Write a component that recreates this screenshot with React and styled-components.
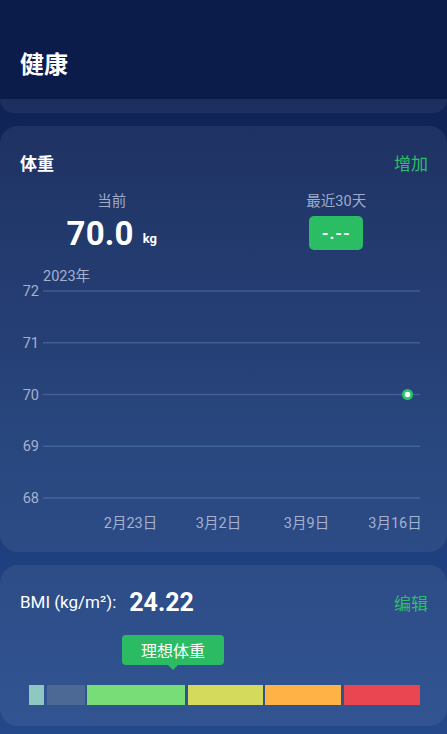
import React from "react";
import styled, { createGlobalStyle } from "styled-components";

const Global = createGlobalStyle`
  html, body { margin: 0; padding: 0; }
  body {
    width: 447px;
    min-height: 734px;
    background: linear-gradient(180deg, #0c1d4c 0px, #0f2357 110px, #1a3a76 450px, #24498b 734px);
    font-family: Roboto, "Noto Sans CJK SC", sans-serif;
    color: #fff;
    overflow: hidden;
  }
`;

const Page = styled.div`
  display: flex;
  flex-direction: column;
  min-height: 734px;
`;

const Header = styled.header`
  height: 99px;
  box-sizing: border-box;
  padding: 50px 20px 0;
  background: #0b1c4b;
`;

const Title = styled.h1`
  margin: 0;
  font-size: 24px;
  line-height: 30px;
  font-weight: 700;
`;

const PrevCardEdge = styled.div`
  height: 14px;
  background: rgba(255, 255, 255, 0.06);
  border-radius: 0 0 18px 18px;
`;

const Card = styled.section`
  margin-top: ${(p) => p.$top}px;
  background: rgba(255, 255, 255, 0.065);
  border-radius: 18px;
  padding: ${(p) => p.$pad};
  display: flex;
  flex-direction: column;
`;

const CardHead = styled.div`
  display: flex;
  align-items: center;
  justify-content: space-between;
  padding: 0 19px 0 20px;
  height: ${(p) => p.$h}px;
`;

const CardTitle = styled.div`
  font-size: 17px;
  font-weight: 700;
`;

const Action = styled.div`
  font-size: 17px;
  color: #2cbf67;
`;

const Stats = styled.div`
  display: grid;
  grid-template-columns: 1fr 1fr;
  margin-top: 18px;
`;

const Stat = styled.div`
  display: flex;
  flex-direction: column;
  align-items: center;
`;

const StatLabel = styled.div`
  font-size: 14.5px;
  line-height: 20px;
  color: #9eabc9;
  margin-left: ${(p) => p.$ml || 0}px;
`;

const ValueRow = styled.div`
  height: 38px;
  display: flex;
  align-items: center;
  padding-top: 4px;
  box-sizing: border-box;
`;

const BigValue = styled.span`
  font-size: 33px;
  font-weight: 700;
  letter-spacing: 0.2px;
`;

const Unit = styled.span`
  font-size: 13px;
  font-weight: 700;
  margin-left: 9px;
  margin-top: 10px;
`;

const DashButton = styled.div`
  width: 54px;
  height: 34px;
  margin-top: 4px;
  margin-left: 2px;
  border-radius: 5px;
  background: #2bbd64;
  display: flex;
  align-items: center;
  justify-content: center;
  font-size: 17px;
  font-weight: 700;
  letter-spacing: 1px;
`;

const ChartBox = styled.div`
  margin-top: 12px;
  height: 278px;
`;

const BmiLabel = styled.span`
  font-size: 17px;
  margin-right: 13px;
`;

const BmiValue = styled.span`
  font-size: 25px;
  font-weight: 700;
`;

const BmiLeft = styled.div`
  display: flex;
  align-items: center;
`;

const ScaleArea = styled.div`
  position: relative;
  margin-top: 19px;
  padding-top: 50px;
`;

const Tip = styled.div`
  position: absolute;
  top: 0;
  left: ${(p) => p.$left}px;
  width: 102px;
  height: 30px;
  border-radius: 4px;
  background: #2bbb62;
  display: flex;
  align-items: center;
  justify-content: center;
  font-size: 16px;
  &::after {
    content: "";
    position: absolute;
    left: 45px;
    bottom: -5px;
    border-left: 6px solid transparent;
    border-right: 6px solid transparent;
    border-top: 6px solid #2bbb62;
  }
`;

const Bar = styled.div`
  display: flex;
  gap: 2.6px;
  padding-left: 29px;
  height: 20px;
`;

const Seg = styled.div`
  width: ${(p) => p.$w}px;
  background: ${(p) => p.$c};
`;

const gridY = [29, 80.75, 132.5, 184.25, 236];
const yLabels = ["72", "71", "70", "69", "68"];
const xLabels = [
  ["2月23日", 130.5],
  ["3月2日", 218.5],
  ["3月9日", 306.5],
  ["3月16日", 395],
];

function WeightChart() {
  const labelStyle = {
    fontFamily: 'Roboto, "Noto Sans CJK SC", sans-serif',
    fontSize: 14.5,
    fill: "#a4b1cf",
  };
  return (
    <svg width="447" height="278" viewBox="0 0 447 278">
      <text x="43" y="19" style={labelStyle}>2023年</text>
      {gridY.map((y, i) => (
        <g key={i}>
          <line x1="43" x2="420" y1={y} y2={y} stroke="rgba(120,155,215,0.33)" strokeWidth="1.3" />
          <text x="39" y={y + 5} textAnchor="end" style={labelStyle}>
            {yLabels[i]}
          </text>
        </g>
      ))}
      {xLabels.map(([t, x]) => (
        <text key={t} x={x} y="266" textAnchor="middle" style={labelStyle}>
          {t}
        </text>
      ))}
      <circle cx="407.5" cy="132.5" r="5.5" fill="#27c46a" />
      <circle cx="407.5" cy="132.5" r="2.8" fill="#ffffff" />
    </svg>
  );
}

const segments = [
  [15, "#8ec8c0"],
  [38, "#4c6996"],
  [98, "#77dd77"],
  [75, "#d4db5c"],
  [76, "#ffb347"],
  [76, "#ea4651"],
];

export default function App() {
  return (
    <Page>
      <Global />
      <Header>
        <Title>健康</Title>
      </Header>
      <PrevCardEdge />
      <Card $top={13} $pad="24px 0 12px">
        <CardHead $h={24}>
          <CardTitle>体重</CardTitle>
          <Action>增加</Action>
        </CardHead>
        <Stats>
          <Stat>
            <StatLabel>当前</StatLabel>
            <ValueRow>
              <BigValue>70.0</BigValue>
              <Unit>kg</Unit>
            </ValueRow>
          </Stat>
          <Stat>
            <StatLabel $ml={2}>最近30天</StatLabel>
            <DashButton>-.--</DashButton>
          </Stat>
        </Stats>
        <ChartBox>
          <WeightChart />
        </ChartBox>
      </Card>
      <Card $top={13} $pad="23px 0 21px">
        <CardHead $h={28}>
          <BmiLeft>
            <BmiLabel>BMI (kg/m²):</BmiLabel>
            <BmiValue>24.22</BmiValue>
          </BmiLeft>
          <Action>编辑</Action>
        </CardHead>
        <ScaleArea>
          <Tip $left={122}>理想体重</Tip>
          <Bar>
            {segments.map(([w, c], i) => (
              <Seg key={i} $w={w} $c={c} />
            ))}
          </Bar>
        </ScaleArea>
      </Card>
    </Page>
  );
}
